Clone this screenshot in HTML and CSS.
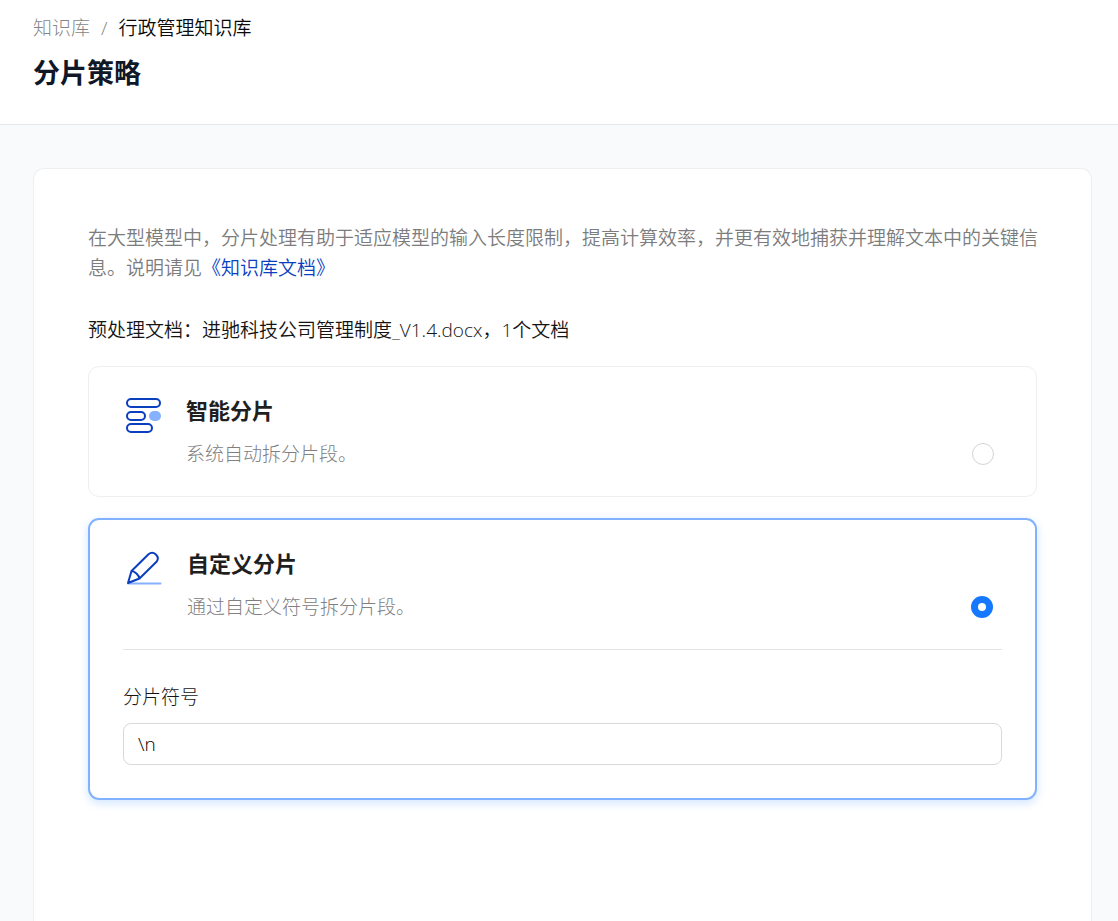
FILE: index.html
```html
<!DOCTYPE html>
<html lang="zh-CN">
<head>
<meta charset="utf-8">
<meta name="viewport" content="width=device-width, initial-scale=1">
<title>分片策略</title>
<link rel="stylesheet" href="styles.css">
</head>
<body>
<header class="page-header">
  <nav class="breadcrumb" aria-label="breadcrumb">
    <a class="crumb-link" href="#">知识库</a>
    <span class="crumb-separator">/</span>
    <span>行政管理知识库</span>
  </nav>
  <h1 class="page-title">分片策略</h1>
</header>
<main class="page-main">
  <section class="panel">
    <p class="intro">在大型模型中，分片处理有助于适应模型的输入长度限制，提高计算效率，并更有效地捕获并理解文本中的关键信息。说明请见<a class="doc-link" href="#">《知识库文档》</a></p>
    <p class="files">预处理文档：进驰科技公司管理制度_V1.4.docx，1个文档</p>
    <form class="options">
      <div class="option">
        <label class="option-head" for="smart">
          <svg class="option-icon" viewBox="0 0 40 40" aria-hidden="true">
            <g fill="none" stroke="#0a3fbf" stroke-width="2">
              <rect x="5" y="4" width="33" height="8" rx="4"/>
              <rect x="5" y="17" width="18" height="8" rx="4"/>
              <rect x="5" y="29" width="25" height="8" rx="4"/>
            </g>
            <rect x="27" y="16" width="12" height="10" rx="5" fill="#85b1ff"/>
          </svg>
          <span class="option-text">
            <span class="option-title">智能分片</span>
            <span class="option-desc">系统自动拆分片段。</span>
          </span>
          <input class="radio" type="radio" name="mode" id="smart">
        </label>
      </div>
      <div class="option option-selected">
        <label class="option-head" for="custom">
          <svg class="option-icon" viewBox="0 0 40 40" aria-hidden="true">
            <path d="M5 35.500H37.500" fill="none" stroke="#85b1ff" stroke-width="2" stroke-linecap="round"/>
            <path d="M5 35L8.500 23L25.500 6.200C30.500 2 37.500 8.500 33.500 13.800L16.500 30.500ZM8.500 23C11.500 23 16 27 16.500 30.500" fill="none" stroke="#0a3fbf" stroke-width="2" stroke-linejoin="round"/>
          </svg>
          <span class="option-text">
            <span class="option-title">自定义分片</span>
            <span class="option-desc">通过自定义符号拆分片段。</span>
          </span>
          <input class="radio" type="radio" name="mode" id="custom" checked>
        </label>
        <div class="field">
          <label class="field-label" for="symbol">分片符号</label>
          <input class="field-input" type="text" id="symbol" value="\n">
        </div>
      </div>
    </form>
  </section>
</main>
</body>
</html>
```
FILE: styles.css
```css
* {
  box-sizing: border-box;
}

body {
  margin: 0;
  min-height: 100vh;
  display: flex;
  flex-direction: column;
  background: #f9fafc;
  color: #141414;
  font-family: "Open Sans", "Noto Sans CJK SC", sans-serif;
  font-size: 19px;
  font-weight: 350;
  line-height: 30px;
}

a {
  text-decoration: none;
}

.page-header {
  padding: 13px 33px 33px;
  background: #fff;
  border-bottom: 1px solid #e4e6e9;
}

.breadcrumb {
  display: flex;
  gap: 11px;
  color: #0a0a0a;
}

.crumb-link,
.crumb-separator {
  color: #858585;
  font-weight: 300;
}

.page-title {
  margin: 12px 0 0;
  color: #101828;
  font-size: 27px;
  font-weight: 700;
  line-height: 36px;
}

.page-main {
  flex: 1;
  display: flex;
  flex-direction: column;
  padding: 43px 26px 0 33px;
}

.panel {
  flex: 1;
  padding: 54px;
  background: #fff;
  border: 1px solid #eeeff1;
  border-bottom: 0;
  border-radius: 11px 11px 0 0;
}

/* Slightly wider than the cards so that a full line of characters fits. */
.intro {
  margin: 0 -4px 32px 0;
  color: #7c7c7c;
}

.doc-link {
  color: #0a3fbf;
}

.files {
  margin: 0 0 21px;
}

.options {
  display: flex;
  flex-direction: column;
  gap: 21px;
}

.option {
  padding: 28px 33px 27px;
  border: 1px solid #efefef;
  border-radius: 11px;
}

.option-selected {
  padding-bottom: 33px;
  border: 2px solid #82b1ff;
  box-shadow: 0 3px 10px #1677ff33;
}

.option-head {
  display: flex;
  align-items: flex-start;
  cursor: pointer;
}

.option-icon {
  width: 40px;
  height: 40px;
  flex: none;
}

.option-text {
  flex: 1;
  display: flex;
  flex-direction: column;
  gap: 14px;
  padding-left: 24px;
}

.option-title {
  color: #1f1f1f;
  font-size: 22px;
  font-weight: 700;
}

.option-desc {
  color: #808080;
  font-weight: 300;
}

.radio {
  appearance: none;
  flex: none;
  align-self: flex-end;
  width: 22px;
  height: 22px;
  margin: 0 9px 4px;
  border: 1px solid #d4d4d4;
  border-radius: 50%;
  background: #fff;
}

.radio:checked {
  border: 7px solid #1677ff;
}

.field {
  display: flex;
  flex-direction: column;
  gap: 11px;
  margin-top: 27px;
  padding-top: 32px;
  border-top: 1px solid #e4e4e4;
}

.field-label {
  font-weight: 300;
}

.field-input {
  width: 100%;
  height: 42px;
  padding: 0 14px;
  border: 1px solid #d9d9d9;
  border-radius: 8px;
  background: #fff;
  color: #000;
  font: inherit;
}
```
